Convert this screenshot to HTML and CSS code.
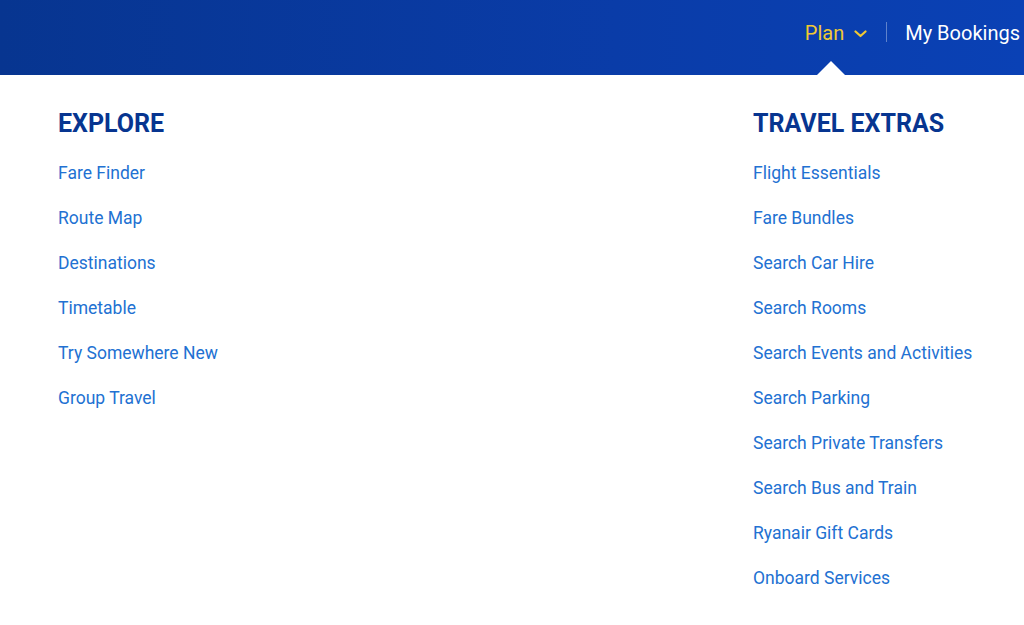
FILE: index.html
```html
<!DOCTYPE html>
<html lang="en">
<head>
<meta charset="utf-8">
<title>Plan menu</title>
<link rel="stylesheet" href="styles.css">
</head>
<body>
<header class="topbar">
  <nav class="topnav">
    <div class="nav-item nav-item--active">
      <span class="nav-label">Plan</span>
      <svg class="chevron" width="13" height="8" viewBox="0 0 13 8" aria-hidden="true"><path d="M1.5 1.5 L6.5 6 L11.5 1.5" fill="none" stroke="currentColor" stroke-width="2.2" stroke-linecap="round" stroke-linejoin="round"/></svg>
      <span class="caret"></span>
    </div>
    <span class="divider"></span>
    <div class="nav-item"><span class="nav-label">My Bookings</span></div>
  </nav>
</header>
<main class="menu">
  <section class="menu-col menu-col--left">
    <h2 class="menu-title">EXPLORE</h2>
    <ul class="menu-list">
      <li><a href="#">Fare Finder</a></li>
      <li><a href="#">Route Map</a></li>
      <li><a href="#">Destinations</a></li>
      <li><a href="#">Timetable</a></li>
      <li><a href="#">Try Somewhere New</a></li>
      <li><a href="#">Group Travel</a></li>
    </ul>
  </section>
  <section class="menu-col">
    <h2 class="menu-title">TRAVEL EXTRAS</h2>
    <ul class="menu-list">
      <li><a href="#">Flight Essentials</a></li>
      <li><a href="#">Fare Bundles</a></li>
      <li><a href="#">Search Car Hire</a></li>
      <li><a href="#">Search Rooms</a></li>
      <li><a href="#">Search Events and Activities</a></li>
      <li><a href="#">Search Parking</a></li>
      <li><a href="#">Search Private Transfers</a></li>
      <li><a href="#">Search Bus and Train</a></li>
      <li><a href="#">Ryanair Gift Cards</a></li>
      <li><a href="#">Onboard Services</a></li>
    </ul>
  </section>
</main>
</body>
</html>
```

FILE: styles.css
```css
* { box-sizing: border-box; }
html, body { margin: 0; padding: 0; }
body {
  font-family: Roboto, "Liberation Sans", Arial, sans-serif;
  background: #ffffff;
  width: 1024px;
  height: 625px;
  overflow: hidden;
}
.topbar {
  height: 75px;
  background: linear-gradient(90deg, #073590 0%, #0a3ca8 60%, #0a41b5 100%);
  display: flex;
  justify-content: flex-end;
}
.topnav {
  display: flex;
  align-items: flex-start;
  padding-top: 21px;
  margin-right: 4px;
  white-space: nowrap;
}
.nav-item {
  position: relative;
  display: flex;
  align-items: center;
  height: 24px;
  font-size: 20px;
  line-height: 24px;
  color: #ffffff;
}
.nav-item--active { color: #f1c933; }
.chevron { margin-left: 10px; margin-top: 1px; }
.caret {
  position: absolute;
  left: 12px;
  top: 40px;
  width: 0;
  height: 0;
  border-left: 14px solid transparent;
  border-right: 14px solid transparent;
  border-bottom: 14px solid #ffffff;
}
.divider {
  width: 1px;
  height: 20px;
  margin: 1px 18px 0 19px;
  background: rgba(255, 255, 255, 0.35);
}
.menu {
  display: flex;
  padding: 34px 0 0 58px;
}
.menu-col--left { width: 695px; }
.menu-title {
  margin: 0;
  font-size: 25px;
  line-height: 30px;
  font-weight: 700;
  color: #073590;
}
.menu-list {
  list-style: none;
  margin: 12px 0 0;
  padding: 0;
}
.menu-list li {
  height: 45px;
  line-height: 45px;
  font-size: 17.5px;
}
.menu-list a {
  color: #2271d2;
  text-decoration: none;
}
```
